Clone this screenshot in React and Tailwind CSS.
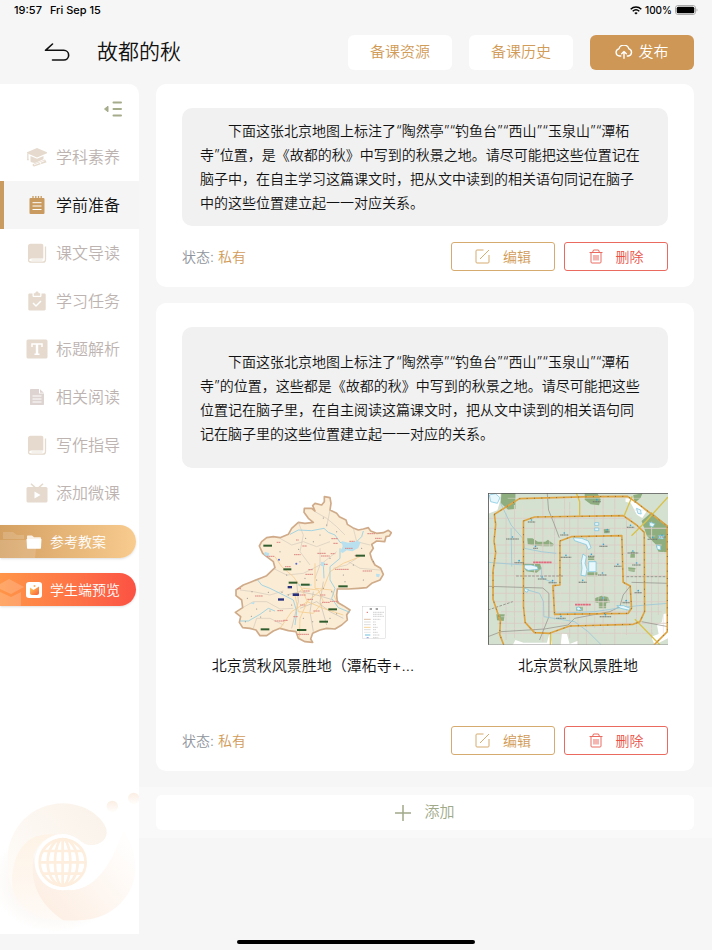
import { useState } from "react";

const INTRO_SHORT =
  "下面这张北京地图上标注了“陶然亭”“钓鱼台”“西山”“玉泉山”“潭柘寺”位置，是《故都的秋》中写到的秋景之地。请尽可能把这些位置记在脑子中，在自主学习这篇课文时，把从文中读到的相关语句同记在脑子中的这些位置建立起一一对应关系。";

const INTRO_LONG =
  "下面这张北京地图上标注了“陶然亭”“钓鱼台”“西山”“玉泉山”“潭柘寺”的位置，这些都是《故都的秋》中写到的秋景之地。请尽可能把这些位置记在脑子里，在自主阅读这篇课文时，把从文中读到的相关语句同记在脑子里的这些位置建立起一一对应的关系。";

/* ---------- Sidebar icons ---------- */

const CapIcon = () => (
  <svg viewBox="0 0 22 20" className="h-5 w-[22px]" fill="currentColor">
    <path d="M11 1 1 5.2v1L11 10.4 21 6.2v-1z" />
    <path d="M1.2 6.5h1.3v5.2l.6 1.6H.8l.4-1.6z" />
    <path d="M4.5 9v5.5c1.6 1.3 3.5 1.6 5 1.3l8-3.6V9L11 11.7z" />
    <path d="m7 17 12-4.6 1.6 2.8L8.2 19.4c-1.6.2-2-1.8-1.2-2.4z" />
    <path d="m8 17.8 10.5-4M14 14.5l1 3" stroke="#fff" strokeWidth=".8" fill="none" />
  </svg>
);

const NotepadIcon = () => (
  <svg viewBox="0 0 22 20" className="h-5 w-[22px]" fill="currentColor">
    <path d="M4.500 3h13a1 1 0 0 1 1 1v14a1 1 0 0 1-1 1h-13a1 1 0 0 1-1-1V4a1 1 0 0 1 1-1z" />
    <path d="M7 1v4M9.800 1v4M12.500 1v4M15.200 1v4" stroke="currentColor" strokeWidth="1.300" />
    <path d="M6.500 7.700h9M6.500 11h9M6.500 14.500h9" stroke="#fff" strokeWidth="1" />
  </svg>
);

const BookIcon = () => (
  <svg viewBox="0 0 22 20" className="h-5 w-[22px]" fill="currentColor">
    <path d="M4.500.7h11c1 0 1.800.8 1.800 1.800v13H5c-1.600 0-3 .6-3 2V3.200C2 1.700 3 .7 4.500.7z" />
    <path
      d="M19.500 3.500v13c0 1.500-1 2.700-2.500 2.700H5.500c-1.800 0-3-.8-3-2.200 0-1 .8-1.700 2-1.700"
      fill="none"
      stroke="currentColor"
      strokeWidth="1.300"
    />
    <path d="M5.500 17h11" stroke="currentColor" strokeWidth=".8" />
  </svg>
);

const ClipboardIcon = () => (
  <svg viewBox="0 0 22 20" className="h-5 w-[22px]">
    <path
      d="M3.500 2.500h3v2.200c0 .8.5 1.300 1.300 1.300h6.400c.8 0 1.300-.5 1.300-1.300V2.500h3c.7 0 1.200.5 1.200 1.200v14.600c0 .7-.5 1.200-1.200 1.200h-15c-.7 0-1.200-.5-1.200-1.200V3.700c0-.7.500-1.200 1.200-1.200z"
      fill="currentColor"
    />
    <path d="M7.800 2.300h1.400C9.500 1 10 .5 11 .5s1.500.5 1.800 1.800h1.400v2.500H7.800z" fill="currentColor" />
    <path d="m7 12 3 3 5-5" fill="none" stroke="#fff" strokeWidth="1.500" />
  </svg>
);

const TitleIcon = () => (
  <svg viewBox="0 0 22 20" className="h-5 w-[22px]">
    <rect x=".500" y=".500" width="21" height="19" rx="1.500" fill="currentColor" />
    <path d="M6 8V5h10v3M11 5v10.500M8.500 15.300h5" fill="none" stroke="#fff" strokeWidth="1.500" />
    <path d="M11 5v10" stroke="#fff" strokeWidth="2.400" />
  </svg>
);

const DocIcon = () => (
  <svg viewBox="0 0 22 20" className="h-5 w-[22px] text-[#ddd3d0]">
    <path d="M5 2h8v4.500h5V17c0 .7-.4 1-1 1H5c-.7 0-1-.4-1-1V3c0-.6.4-1 1-1z" fill="currentColor" />
    <path d="M14 2.200 17.800 5.700H14z" fill="currentColor" />
    <path d="M6.500 9h9M6.500 12h9M6.500 15h9" stroke="#fff" strokeWidth="1" />
  </svg>
);

const VideoIcon = () => (
  <svg viewBox="0 0 22 20" className="h-5 w-[22px]">
    <rect x=".500" y="4" width="21" height="15.500" rx="1.500" fill="currentColor" />
    <path d="m5 .8 4 3.600M17 .8l-4 3.600" stroke="currentColor" strokeWidth="1.500" />
    <path d="M8.500 8.500v7l6-3.500z" fill="#fff" />
  </svg>
);

const MENU = [
  { label: "学科素养", Icon: CapIcon },
  { label: "学前准备", Icon: NotepadIcon },
  { label: "课文导读", Icon: BookIcon },
  { label: "学习任务", Icon: ClipboardIcon },
  { label: "标题解析", Icon: TitleIcon },
  { label: "相关阅读", Icon: DocIcon },
  { label: "写作指导", Icon: BookIcon },
  { label: "添加微课", Icon: VideoIcon },
];

/* ---------- Status bar and header ---------- */

const StatusBar = () => (
  <div className="flex h-5 items-center justify-between px-[14px] text-[11px] font-medium text-black">
    <div className="flex gap-2">
      <span>19:57</span>
      <span>Fri Sep 15</span>
    </div>
    <div className="flex items-center gap-[3px] text-[10px]">
      <svg viewBox="0 0 12 9" className="h-[9px] w-3" fill="none" stroke="#000" strokeWidth="1.500">
        <path d="M.7 3.200c3-2.800 7.600-2.800 10.600 0M2.700 5.300c1.900-1.700 4.700-1.700 6.600 0" />
        <path d="m4.300 6.900 1.700 1.700 1.700-1.700c-.9-.8-2.500-.8-3.400 0z" fill="#000" stroke="none" />
      </svg>
      <span>100%</span>
      <svg viewBox="0 0 23 10" className="h-[10px] w-[23px]">
        <rect x=".500" y=".500" width="20" height="9" rx="2.500" fill="#fff" stroke="#aaa" />
        <rect x="1.700" y="1.700" width="17.600" height="6.600" rx="1.500" />
        <path d="M21.500 3.500c1.300.5 1.300 2.500 0 3z" fill="#aaa" />
      </svg>
    </div>
  </div>
);

const Header = () => (
  <header className="flex h-16 items-center justify-between pl-11 pr-[18px]">
    <div className="flex items-center gap-[27px]">
      <button aria-label="返回">
        <svg viewBox="0 0 26 18" className="h-[18px] w-[26px]" fill="none" stroke="#111" strokeWidth="1.600" strokeLinecap="round" strokeLinejoin="round">
          <path d="M8.500 1 1.500 7.300h18.300a4.700 4.700 0 0 1 0 9.700H8.500" />
        </svg>
      </button>
      <h1 className="text-[21px] leading-7 text-[#111]">故都的秋</h1>
    </div>
    <div className="flex gap-[17px] text-[15px]">
      <button className="h-[35px] w-[104px] rounded-md bg-white text-[#d19b58]">备课资源</button>
      <button className="h-[35px] w-[104px] rounded-md bg-white text-[#d19b58]">备课历史</button>
      <button className="flex h-[35px] w-[104px] items-center justify-center gap-[5px] rounded-md bg-[#ce9755] text-white">
        <svg viewBox="0 0 18 14" className="h-[14px] w-[18px]" fill="none" stroke="#fff" strokeWidth="1.400" strokeLinecap="round" strokeLinejoin="round">
          <path d="M5.800 11H4.500a3.600 3.600 0 0 1-.6-7.100 5.200 5.200 0 0 1 10-.1A3.700 3.700 0 0 1 13.300 11h-1M9 13.200V6.800M6.700 8.800 9 6.500l2.300 2.300" />
        </svg>
        发布
      </button>
    </div>
  </header>
);

/* ---------- Sidebar ---------- */

const Watermark = () => (
  <svg viewBox="0 0 417 460" className="mt-auto block w-full" fill="none">
    <defs>
      <linearGradient id="wmTop" x1="0" y1="1" x2="1" y2="0">
        <stop offset="0" stopColor="#fffdfb" />
        <stop offset="1" stopColor="#faf2e9" />
      </linearGradient>
      <linearGradient id="wmLeft" x1="0" y1="0" x2="0" y2="1">
        <stop offset="0" stopColor="#fef3e6" />
        <stop offset="1" stopColor="#fffaf6" />
      </linearGradient>
      <linearGradient id="wmRight" gradientUnits="userSpaceOnUse" x1="150" y1="380" x2="380" y2="190">
        <stop offset="0" stopColor="#fdefe4" />
        <stop offset="1" stopColor="#fffefd" />
      </linearGradient>
      <radialGradient id="wmGlow">
        <stop offset=".6" stopColor="#f7efe9" />
        <stop offset="1" stopColor="#fff" />
      </radialGradient>
      <linearGradient id="wmDot" x1="0" y1="0" x2="0" y2="1">
        <stop offset="0" stopColor="#fbeee3" />
        <stop offset="1" stopColor="#fffdfb" />
      </linearGradient>
    </defs>
    <ellipse cx="165" cy="300" rx="190" ry="155" fill="url(#wmGlow)" opacity=".5" />
    <path d="M190 418C90 420 22 345 22 243S95 67 190 67c65 0 120 42 130 80 6 24-12 46-48 46-30 0-42-33-86-33-46 0-80 35-88 83-6 77 42 140 92 175z" fill="url(#wmTop)" />
    <path d="M190 418c-80 0-152-43-154-108-1-70 25-130 78-145 20-6 42-6 55-5-40 14-68 40-72 83-4 77 42 140 93 175z" fill="url(#wmLeft)" />
    {/* clear area between the two arms of the swirl */}
    <path d="M186 160c44 0 56 33 86 33 30 0 52-20 48-46 28-20 50-10 48 5-20 70-70 176-160 176z" fill="#fff" />
    <path d="M100 225c8 66 51 103 108 103 88 0 129-92 163-180 55 90 40 165-6 215-48 52-105 58-175 55-70-48-102-108-90-193z" fill="url(#wmRight)" />
    <circle cx="188" cy="244" r="84" fill="#fff" />
    <g stroke="#fdeedd" strokeWidth="8">
      <circle cx="188" cy="244" r="69" />
      <ellipse cx="188" cy="244" rx="23" ry="70" />
      <ellipse cx="188" cy="244" rx="45" ry="70" />
      <path d="M188 175v138M119 244h138M128 210h120M128 278h120" />
    </g>
    <circle cx="337" cy="76" r="17" fill="url(#wmDot)" />
    <circle cx="401" cy="52" r="17" fill="url(#wmDot)" />
  </svg>
);

const Sidebar = () => {
  const [active, setActive] = useState("学前准备");

  return (
    <aside className="flex w-[139px] shrink-0 flex-col overflow-hidden rounded-tr-[10px] bg-white">
      <div className="flex h-[49px] items-center justify-end pr-[17px]">
        <button aria-label="收起菜单">
          <svg viewBox="0 0 18 16" className="h-4 w-[18px]" fill="#a5ac8b">
            <path d="M.5 8 4 5.200v5.600z" stroke="#a5ac8b" strokeLinejoin="round" />
            <path d="M9.500 1.500h7.500M9.500 8h7.500M9.500 14.500h7.500" stroke="#a5ac8b" strokeWidth="2" strokeLinecap="round" />
          </svg>
        </button>
      </div>

      <nav className="flex flex-col">
        {MENU.map(({ label, Icon }) => (
          <button
            key={label}
            onClick={() => setActive(label)}
            className={
              label === active
                ? "flex h-12 items-center gap-2 border-l-4 border-[#c99b60] bg-[#f5f5f5] pl-[22px] text-base text-[#111]"
                : "flex h-12 items-center gap-2 border-l-4 border-transparent pl-[22px] text-base text-[#bdb4b1]"
            }
          >
            <span className={label === active ? "text-[#c99b60]" : "text-[#e5dacd]"}>
              <Icon />
            </span>
            {label}
          </button>
        ))}
      </nav>

      <div className="mt-2 flex flex-col gap-[15px] pr-[3px] text-sm text-white">
        <button className="relative flex h-[33px] items-center gap-2 overflow-hidden rounded-r-full bg-linear-to-r from-[#d4a062] to-[#f8cb8e] pl-[26px] shadow-sm">
          <svg viewBox="0 0 38 33" className="absolute left-0 top-0 h-[33px] w-[38px]" fill="#fff">
            <path d="M3 7h10l4 3h7v4H3z" opacity=".150" />
            <path d="M0 15h37l-2 18H0z" opacity=".150" />
          </svg>
          <svg viewBox="0 0 16 14" className="relative h-[14px] w-4" fill="#fff">
            <path d="M1 4V1.500C1 .9 1.400.5 2 .5h4l2 1.700h6c.6 0 1 .4 1 1V4z" opacity=".85" />
            <path d="M.500 4h15l-.5 8.700c0 .6-.4 1-1 1H2c-.6 0-1-.4-1-1z" />
          </svg>
          <span className="relative">参考教案</span>
        </button>
        <button className="relative flex h-[33px] items-center gap-2 overflow-hidden rounded-r-full bg-linear-to-r from-[#ff9548] to-[#fb5144] pl-[26px] shadow-sm">
          <svg viewBox="0 0 26 33" className="absolute left-0 top-0 h-[33px] w-[26px]" fill="#fff" opacity=".180">
            <path d="M0 11 9 6l15 8-13 7L0 16z" />
            <path d="m0 19 11 5 10-5v14H0z" />
          </svg>
          <svg viewBox="0 0 16 16" className="relative h-4 w-4">
            <defs>
              <linearGradient id="preview" x1="0" y1="0" x2="1" y2="1">
                <stop offset="0" stopColor="#ffd05c" />
                <stop offset="1" stopColor="#fb5c36" />
              </linearGradient>
            </defs>
            <rect width="16" height="16" rx="3" fill="#fff" />
            <path d="M4 5.500 7.500 8 13 4.500v6.300c0 1.500-.8 2.200-2.200 2.200H6c-1.300 0-2-.7-2-2z" fill="url(#preview)" />
            <circle cx="8.500" cy="4" r="1" fill="#ffb05c" />
          </svg>
          <span className="relative">学生端预览</span>
        </button>
      </div>

      <Watermark />
    </aside>
  );
};

/* ---------- Maps ---------- */

// [x, y, width] of the small place names
const DISTRICT_NAMES = [
  [170, 172, 12], [228, 165, 8], [247, 183, 14], [222, 209, 20], [195, 245, 18], [292, 205, 26],
  [303, 213, 26], [332, 206, 14], [334, 161, 20], [340, 175, 14], [388, 169, 16], [404, 212, 14],
  [465, 160, 20], [428, 258, 28], [345, 253, 42], [265, 254, 14], [256, 268, 24], [105, 333, 24],
  [172, 377, 18], [164, 408, 28], [190, 406, 14], [232, 448, 36], [306, 352, 24], [330, 349, 26],
  [375, 190, 24], [442, 146, 24], [140, 214, 24], [312, 238, 12], [238, 330, 20], [262, 343, 18],
  [240, 360, 16], [280, 378, 20], [300, 330, 16], [220, 395, 14], [250, 318, 20], [52, 311, 12],
];

const SCENIC_NAMES = [
  [130, 179, 26], [407, 209, 28], [355, 301, 28], [190, 250, 24], [243, 296, 26], [325, 370, 26],
  [298, 407, 26], [231, 432, 28], [122, 430, 26], [206, 290, 26],
];

const TOWN_DOTS = [
  [310, 99], [257, 160], [236, 193], [300, 150], [186, 322], [145, 322], [96, 320], [82, 340], [94, 394],
  [122, 396], [150, 378], [205, 330], [215, 360], [250, 400], [278, 410], [330, 400], [350, 386], [310, 310],
  [335, 320], [290, 285], [370, 270], [400, 240], [430, 285], [460, 230], [425, 190], [350, 140], [320, 120],
  [280, 170], [240, 230], [180, 200], [330, 220], [375, 290], [76, 410], [110, 372], [200, 270], [255, 280],
];

const DistrictMap = () => (
  <svg viewBox="42 24 474 456" className="h-[152px] w-[158px]" role="img" aria-label="北京市地图">
    <path
      d="M313 35 330 38 333 55 330 75 350 85 358 95 378 105 382 118 398 128 415 135 430 132 445 128 452 138 470 145 490 143 505 136 514 143 508 153 498 155 494 170 470 168 455 178 460 190 450 205 455 222 465 240 482 250 490 268 480 285 455 295 440 308 415 310 385 312 352 312 350 330 352 352 370 362 390 375 380 390 382 405 365 420 345 432 320 430 300 435 278 445 272 462 278 472 255 470 235 460 228 440 205 437 180 430 160 438 140 452 120 452 108 435 90 430 68 428 58 412 62 395 46 382 68 368 65 345 48 332 48 315 70 300 95 290 125 278 140 272 165 248 160 230 140 215 128 205 118 183 125 170 140 158 160 155 180 158 205 148 215 130 235 112 255 115 280 112 265 100 252 82 253 70 275 70 285 78 278 62 285 55 305 60 313 50z"
      fill="#faecd5"
      stroke="#cfab8a"
      strokeWidth="5"
      strokeLinejoin="round"
    />
    <g fill="none" stroke="#c9bfb2" strokeWidth="1.500">
      <path d="M285 80 320 100 350 125 375 150M180 160 215 180 250 170 290 185 330 170M235 112 250 150 240 200 270 240M330 75 320 125M60 315 100 320 150 330 190 318M68 368 100 350 140 350 180 372 220 370M160 250 200 270 250 265 300 240 350 200M400 130 410 170 450 180M385 230 420 250 480 255M300 190 300 240 285 280M100 430 110 400 150 400 190 420M340 250 380 240 410 220" />
      <path d="M200 330 240 320 290 330 340 345M230 290 235 350 215 430M280 320 270 380 280 440M240 370 290 350 330 380 370 400M310 290 300 350 320 420" stroke="#b5aea9" />
    </g>
    <g fill="none" stroke="#f5cd8f" strokeWidth="2.500">
      <path d="M165 215 185 245 220 275 245 310 262 350M285 235 285 310 335 315 350 350M262 350 240 400 238 460M262 350 310 370 370 390M262 350 215 380 180 430M262 350 310 310 330 260 370 235 420 215M225 330 250 310 295 315 310 350 280 385 235 380z" />
    </g>
    <g fill="none" stroke="#93cfe5" strokeWidth="2.500">
      <path d="M210 148 235 135 275 137 312 130 325 142 345 150 360 172 385 180M430 138 425 155 410 170M360 190 360 220 330 245 330 285 345 310 335 340 355 368 390 382M113 285 125 300 150 310 190 330 220 345 230 380 225 420M60 408 85 408 120 388 145 370 165 378M310 240 312 280M235 300 275 300" />
    </g>
    <path d="m365 168 20 5 25-5 12 3-7 18-18 10-17-3-12 8-8-4 8-15zM134 200l14 5-3 12-12-8zM303 230l12 3-2 12-10-3zM468 266l12 2-3 9-8-2zM90 355l14-5-2 8z" fill="#b9e0ef" />
    <g fill="#777">
      {TOWN_DOTS.map(([x, y]) => (
        <circle key={`${x}-${y}`} cx={x} cy={y} r="1.500" />
      ))}
    </g>
    <g stroke="#dd8783" strokeWidth="3" strokeDasharray="5 1">
      {DISTRICT_NAMES.map(([x, y, w]) => (
        <path key={`${x}-${y}`} d={`M${x} ${y}h${w}`} />
      ))}
    </g>
    <g stroke="#315c2d" strokeWidth="6">
      {SCENIC_NAMES.map(([x, y, w]) => (
        <path key={`${x}-${y}`} d={`M${x} ${y + 3}h${w}`} />
      ))}
    </g>
    <g fill="#27307d">
      <rect x="203" y="303" width="13" height="7" />
      <rect x="218" y="325" width="19" height="8" />
      <rect x="174" y="340" width="18" height="7" />
      <circle cx="229" cy="236" r="3" fill="#5668ce" />
      <circle cx="177" cy="224" r="3" fill="#5668ce" />
    </g>
    <rect x="428" y="365" width="69" height="96" fill="#fff" stroke="#bbb" strokeWidth="1" />
    <path d="M449 372h7M467 372h7" stroke="#888" strokeWidth="4" />
    <g strokeWidth="2">
      <path d="M432 403h20" stroke="#cda47d" />
      <path d="M432 411h20M432 419h20M432 434h20" stroke="#ccc" />
      <path d="M432 427h20" stroke="#f3bd65" />
      <path d="M432 442h20" stroke="#ddd" />
      <path d="M435 450h16" stroke="#93cfe5" strokeWidth="4" />
      <path d="M440 458h6" stroke="#5668ce" />
      <path d="M440 382h4" stroke="#d96c68" strokeWidth="3" />
      <path d="M459 382h33M459 388h28M459 394h33M459 403h22M459 411h8M459 419h10M459 427h15M459 434h9M459 442h14M459 450h20M459 458h16" stroke="#bbb" strokeDasharray="4 1" />
    </g>
  </svg>
);

// [x, y, width] of the labels beside the blue markers
const STREET_LABELS = [
  [95, 162, 38], [160, 111, 22], [176, 190, 14], [257, 150, 24], [258, 217, 32], [120, 233, 28],
  [374, 184, 24], [418, 244, 22], [456, 127, 22], [458, 204, 32], [472, 240, 26], [312, 292, 24],
  [190, 282, 26], [222, 293, 24], [479, 323, 22], [443, 353, 22], [245, 400, 28], [375, 395, 34],
  [518, 163, 30], [550, 156, 22], [354, 50, 24], [392, 140, 12], [372, 345, 24], [340, 214, 20], [370, 270, 26],
];

const CityMap = () => (
  <svg viewBox="41 24 538 456" preserveAspectRatio="none" className="h-[152px] w-full" role="img" aria-label="北京城区地图">
    <rect x="41" y="24" width="538" height="456" fill="#d5e1d0" />
    <path d="M41 24h38l-2 25-8 27-28 10zM452 38l22 3 20 20 20 20-12 18-16-10-18-34-16-5zM579 385v75l-40 20-10-25 22-8-5-28 15-8 4-24zM115 480l8-15 24 8 70 0 8-28 8 35zM258 480l4-35 15 2 8 30 25-10v13z" fill="#fff" />
    <g fill="#8fae80">
      <path d="M81 24h42v48l-22 2-22-20zM330 25h38l10 18-5 18-25-3-18-14zM475 30l28-5-6 14-18 15zM530 82l12 10 36 30v80l-28-2-8-22-26-25-16-45zM158 160h16l16 10h22l8-6 18 14-4 6h-28l-24-2-22-4zM147 235l50 2 4 14-15 12-30-4-9-12zM386 133l18-2v14h-16zM360 340l20-8 20 4 6 16-12 3v15h-22v-15l-12-3zM468 200h12v18h-14zM460 247l22 2-3 12-18-3zM66 388h25l-3 20-20-2zM340 215h20v10h-20zM338 262h30v12h-30zM305 365h20v12h-20z" />
    </g>
    <g fill="none" stroke="#d9cdc6" strokeWidth="3">
      <path d="M41 100h430M41 130h540M60 180h500M41 205h535M60 235h520M41 272h538M55 325h520M60 350h520M80 380h480M70 415h509M75 445h460" />
      <path d="M95 85v380M120 60v400M180 110v330M205 40v430M240 95v310M285 50v410M310 90v390M335 155v325M360 60v370M385 30v410M420 30v450M455 100v350M485 140v300M530 110v350M550 200v190M270 40v110" />
    </g>
    <g fill="none" stroke="#e3dad2" strokeWidth="1.500">
      <path d="M41 153h500M41 220h538M41 255h538M60 300h500M60 365h500M100 40h410M80 75h470M80 430h460M80 395h430M145 60v400M225 100v380M258 100v380M322 40v400M372 90v370M400 80v400M440 110v350M500 140v330M565 200v250" />
    </g>
    <g fill="none" stroke="#8c8a83" strokeWidth="2">
      <path d="M218 24 222 75 238 115 254 158M41 304 205 309 223 325 223 395 195 465M41 455 80 440 210 432 280 420 300 400 405 380 435 365 445 330 467 302M470 292 579 295M500 410 579 425" />
      <path d="M41 375 115 350M125 273h140M455 275h124" strokeWidth="2.500" strokeDasharray="8 4" />
    </g>
    <g fill="none" stroke="#9bc8d9" strokeWidth="2.500">
      <path d="M79 55 110 120 145 160 150 190 200 200 245 205M41 232 120 238 150 240M110 130 112 245M160 315 195 325 207 350 208 395 300 410 340 440 380 480M240 385 360 380 440 368 490 362 579 355M200 245 202 280 235 292" />
    </g>
    <g fill="#e8f7fb" stroke="#70bfdc" strokeWidth="2">
      <path d="M45 30l18-4 14 12-8 17-20-5zM150 240l20 0 18 5 3 8-30 3-12-7zM325 207l10 8-4 20 6 18-4 20-14-2 3-22-2-20zM296 158l25 2 20 8 8 20-8 6-6-15-35-12zM342 230h22v30h-22zM360 113h12v8h-12zM360 129h12v8h-12zM485 70l12 5 2 12-10-2zM524 112l16 4-6 10-10-4zM545 180l12 3 0 12-10-2zM426 362l20 0 20 8-2 6-26-6zM550 152l18 0-4 10-14-2zM305 368l8-2 8 8-12 2zM150 310l12 4-4 8-8-4z" />
    </g>
    <g fill="none" stroke="#d9c24b" strokeWidth="4">
      <path d="M305 24 315 50 315 92M472 34 448 92M579 36 515 107 470 152M480 403 555 480M228 445v35" />
    </g>
    <g fill="none" stroke="#dfa442" strokeWidth="5" strokeLinejoin="round">
      <path d="M60 88 135 41 350 35 458 34 485 53 579 125M60 88l4 30-5 50 5 35-8 55 0 85 22 65-2 40 12 32" />
      <path d="M147 108 180 96 445 92 485 120 508 142 509 380 495 410 475 418 285 423 225 445 180 443 152 412 147 365zM577 125V440L537 480" />
      <path d="M256 168 290 155 441 152 445 292 466 303 470 370 460 385 240 388 235 302 256 300z" />
    </g>
    <g fill="none" stroke="#7d6233" strokeWidth="2.500" strokeDasharray="3 19">
      <path d="M60 88 135 41 350 35 458 34 485 53 579 125M60 88l4 30-5 50 5 35-8 55 0 85 22 65-2 40 12 32M147 108 180 96 445 92 485 120 508 142 509 380 495 410 475 418 285 423 225 445 180 443 152 412 147 365zM577 125V440L537 480M256 168 290 155 441 152 445 292 466 303 470 370 460 385 240 388 235 302 256 300z" />
    </g>
    {STREET_LABELS.map(([x, y, w]) => (
      <g key={`${x}-${y}`}>
        <path d={`M${x} ${y}h${w}`} stroke="#6d766f" strokeWidth="3" strokeDasharray="4 1" />
        <circle cx={x + w / 2} cy={y - 6} r="2.500" fill="#36a4d5" />
      </g>
    ))}
    <path d="M176 232h56M301 359h47" stroke="#e26a7e" strokeWidth="5" strokeDasharray="7 1" />
    <path d="M42 480V25h537" fill="none" stroke="#555" strokeWidth="3" />
    <path d="M42 479h537" stroke="#999" strokeWidth="2" />
  </svg>
);

/* ---------- Cards ---------- */

const CardFooter = ({ className }) => (
  <div className={`flex items-center justify-between ${className}`}>
    <p className="text-sm text-[#8f949c]">
      状态: <span className="text-[#d19b58]">私有</span>
    </p>
    <div className="flex gap-[9px] text-sm">
      <button className="flex h-[29px] w-[104px] items-center justify-center gap-[13px] rounded-[3px] border border-[#d6ab70] text-[#d19b58]">
        <svg viewBox="0 0 15 15" className="h-[15px] w-[15px]" fill="none" stroke="#d6ab70" strokeWidth="1">
          <path d="M8.500 1H2a1 1 0 0 0-1 1v11a1 1 0 0 0 1 1h11a1 1 0 0 0 1-1V6M5 10l9-9" />
        </svg>
        编辑
      </button>
      <button className="flex h-[29px] w-[104px] items-center justify-center gap-[13px] rounded-[3px] border border-[#ea6a60] text-[#ea4f45]">
        <svg viewBox="0 0 14 15" className="h-[15px] w-[14px]" fill="none" stroke="#ea6a60" strokeWidth="1">
          <path d="M.5 3.500h13M3.500 3.500 4.500 1h5l1 2.500M2 3.500V13a1 1 0 0 0 1 1h8a1 1 0 0 0 1-1V3.500M5 6v5.500M7 6v5.500M9 6v5.500" />
        </svg>
        删除
      </button>
    </div>
  </div>
);

const Card = ({ children }) => (
  <section className="rounded-[10px] bg-white px-[26px] pb-4 pt-6">{children}</section>
);

const App = () => {
  return (
    <div
      lang="zh-CN"
      className="flex min-h-screen flex-col bg-[#f6f6f6] font-['Inter','Noto_Sans_CJK_SC',sans-serif] font-[350]"
    >
      <StatusBar />
      <Header />

      <div className="flex flex-1">
        <Sidebar />

        <main className="min-w-0 flex-1">
          <div className="flex flex-col gap-4 pl-[17px] pr-[18px]">
            <Card>
              <p className="rounded-[10px] bg-[#f1f1f1] py-[11px] pl-[18px] pr-[22px] indent-[28px] text-sm leading-6 text-[#111]">
                {INTRO_SHORT}
              </p>
              <CardFooter className="mt-4" />
            </Card>

            <Card>
              <p className="rounded-[10px] bg-[#f1f1f1] pb-[22px] pl-[18px] pr-[22px] pt-[23px] indent-[28px] text-sm leading-6 text-[#111]">
                {INTRO_LONG}
              </p>
              {/* Attached maps */}
              <div className="mt-[25px] flex justify-between text-[15px] leading-6 text-[#111]">
                <figure className="flex w-[262px] flex-col items-center gap-[9px]">
                  <DistrictMap />
                  <figcaption>北京赏秋风景胜地（潭柘寺+…</figcaption>
                </figure>
                <figure className="flex w-[180px] flex-col items-center gap-[9px]">
                  <CityMap />
                  <figcaption>北京赏秋风景胜地</figcaption>
                </figure>
              </div>
              <CardFooter className="mt-12" />
            </Card>
          </div>

          <div className="mt-4 bg-[#f9f9f9] py-2 pl-[17px] pr-[18px]">
            <button className="flex h-[35px] w-full items-center justify-center gap-[13px] rounded-md bg-white text-[15px] text-[#a0a988]">
              <svg viewBox="0 0 16 16" className="h-4 w-4" stroke="#a0a988" strokeWidth="1.500">
                <path d="M8 0v16M0 8h16" />
              </svg>
              添加
            </button>
          </div>
        </main>
      </div>

      {/* Home indicator */}
      <div className="flex h-4 items-center justify-center">
        <div className="h-1 w-1/3 rounded-full bg-black" />
      </div>
    </div>
  );
};

export default App;
